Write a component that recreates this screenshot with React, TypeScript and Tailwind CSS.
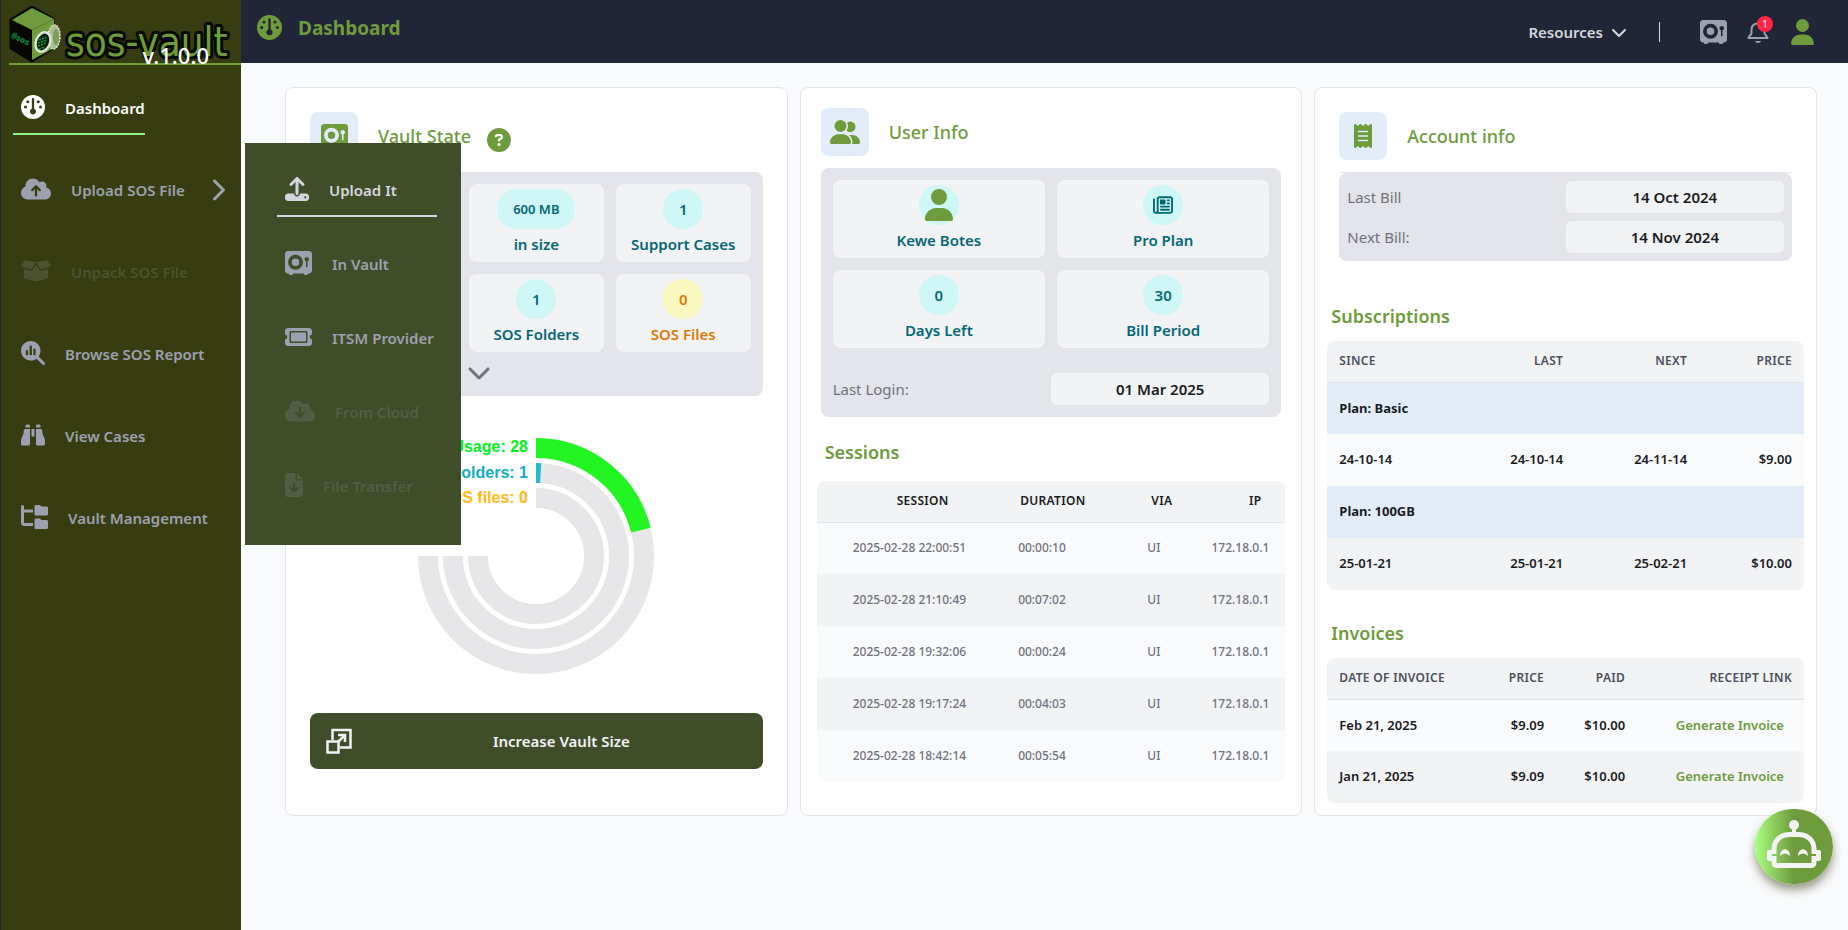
import type { ReactNode } from "react";
import type { IconType } from "react-icons";
import {
  FaBinoculars,
  FaBoxOpen,
  FaChevronDown,
  FaChevronRight,
  FaCircleQuestion,
  FaCloudArrowDown,
  FaCloudArrowUp,
  FaFileArrowDown,
  FaFolderTree,
  FaGauge,
  FaMagnifyingGlassChart,
  FaReceipt,
  FaRegNewspaper,
  FaTicket,
  FaUpload,
  FaUser,
  FaUserGroup,
  FaVault,
} from "react-icons/fa6";

type NavEntry = { label: string; icon: IconType; size: string; active?: boolean; disabled?: boolean; submenu?: boolean };

const mainNav: NavEntry[] = [
  { label: "Dashboard", icon: FaGauge, size: "w-6", active: true },
  { label: "Upload SOS File", icon: FaCloudArrowUp, size: "w-[30px]", submenu: true },
  { label: "Unpack SOS File", icon: FaBoxOpen, size: "w-[30px]", disabled: true },
  { label: "Browse SOS Report", icon: FaMagnifyingGlassChart, size: "w-6" },
  { label: "View Cases", icon: FaBinoculars, size: "w-6" },
  { label: "Vault Management", icon: FaFolderTree, size: "w-[27px]" },
];

const uploadNav: NavEntry[] = [
  { label: "Upload It", icon: FaUpload, size: "w-6", active: true },
  { label: "In Vault", icon: FaVault, size: "w-[27px]" },
  { label: "ITSM Provider", icon: FaTicket, size: "w-[27px]" },
  { label: "From Cloud", icon: FaCloudArrowDown, size: "w-[30px]", disabled: true },
  { label: "File Transfer", icon: FaFileArrowDown, size: "w-[18px]", disabled: true },
];

const sessions = [
  ["2025-02-28 22:00:51", "00:00:10", "UI", "172.18.0.1"],
  ["2025-02-28 21:10:49", "00:07:02", "UI", "172.18.0.1"],
  ["2025-02-28 19:32:06", "00:00:24", "UI", "172.18.0.1"],
  ["2025-02-28 19:17:24", "00:04:03", "UI", "172.18.0.1"],
  ["2025-02-28 18:42:14", "00:05:54", "UI", "172.18.0.1"],
];

const invoices = [
  ["Feb 21, 2025", "$9.09", "$10.00"],
  ["Jan 21, 2025", "$9.09", "$10.00"],
];

function Logo() {
  return (
    <svg viewBox="0 0 232 57" className="block h-[57px] w-[232px]" role="img" aria-label="sos-vault">
      <polygon points="23,1 44,13 44,42 23,55 2,42 2,14" fill="#050805" stroke="#050805" strokeWidth="3" strokeLinejoin="round" />
      <polygon points="23,2 45,13 23,24 3,14" fill="#6e9b3b" />
      <polygon points="23,24 45,13 45,42 23,54" fill="#6e9b3b" />
      <polygon points="3,15 22,25 22,54 3,43" fill="#050805" />
      <ellipse cx="45" cy="31" rx="6" ry="12" fill="#a9bd8c" stroke="#dfe6d4" strokeWidth="1.5" strokeDasharray="2 1" transform="rotate(4 45 31)" />
      <ellipse cx="47" cy="31" rx="3" ry="8" fill="#7f9a5a" />
      <ellipse cx="34" cy="36" rx="7" ry="10" fill="#06200f" stroke="#dfe6d4" strokeWidth="2.5" transform="rotate(22 34 36)" />
      <path d="M30 34l8-3M29 37l9-3M29 40l8-3M30 43l6-2" stroke="#17a24a" strokeWidth="1.5" strokeDasharray="2 1" />
      <text x="2" y="31" fontFamily="Liberation Mono, monospace" fontWeight="700" fontSize="8" fill="#13a545" transform="rotate(27 2 31)">
        @sos
      </text>
      <text
        x="57"
        y="50"
        fontFamily="DejaVu Sans Condensed, DejaVu Sans, sans-serif"
        fontSize="40"
        fill="#6e9b3b"
        stroke="#070a04"
        strokeWidth="6"
        strokeLinejoin="round"
        paintOrder="stroke"
      >
        sos-vault
      </text>
    </svg>
  );
}

function NavLink({ entry, activeClass }: { entry: NavEntry; activeClass: string }) {
  const Icon = entry.icon;
  const tone = entry.active ? activeClass : "border-transparent text-[#9da1af]";
  return (
    <a
      href="#"
      aria-disabled={entry.disabled}
      className={`flex h-[54px] items-center gap-5 border-b-2 pl-2 text-[15px] leading-6 font-semibold ${tone} ${entry.disabled ? "opacity-20" : ""}`}
    >
      <Icon className={`h-6 shrink-0 ${entry.size}`} />
      <span className="pt-0.5 whitespace-nowrap">{entry.label}</span>
    </a>
  );
}

function Sidebar() {
  return (
    <aside className="relative w-[241px] shrink-0 border-l border-[#23252e] bg-[#373d11]">
      <div className="relative ml-2 flex h-[65px] items-end border-b-2 border-[#6e9b3b]">
        <Logo />
        <span className="absolute right-8 -bottom-1 text-[22px] leading-6 font-medium text-white">v.1.0.0</span>
      </div>
      <nav aria-label="Main" className="mt-4 flex flex-col gap-7 pl-3">
        {mainNav.map((entry) => (
          <div key={entry.label} className="flex items-center justify-between pr-4">
            <NavLink entry={entry} activeClass="border-[#8df088] text-white" />
            {entry.submenu && (
              <button type="button" aria-label="Open upload menu" className="text-[#9da1af]">
                <FaChevronRight className="h-6 w-[15px]" />
              </button>
            )}
          </div>
        ))}
      </nav>
      <nav
        aria-label="Upload"
        className="absolute top-[143px] left-full z-10 flex w-[220px] flex-col gap-5 border-l-4 border-white bg-[#404d29] pt-5 pr-6 pb-8 pl-8"
      >
        {uploadNav.map((entry) => (
          <NavLink key={entry.label} entry={entry} activeClass="border-[#d5d6dd] text-[#d5d6dd]" />
        ))}
      </nav>
    </aside>
  );
}

function TopBar() {
  return (
    <header className="flex h-[63px] items-center justify-between bg-[#202638] pr-[34px] pl-4">
      <div className="flex items-center gap-4 pb-2 text-[#6e9b3b]">
        <FaGauge className="size-[25px]" />
        <h1 className="text-[19px] leading-6 font-bold">Dashboard</h1>
      </div>
      <div className="flex items-center text-[#d5d6dd]">
        <button type="button" className="flex items-center gap-2 text-[15px] leading-6 font-semibold">
          Resources
          <FaChevronDown className="size-4" />
        </button>
        <span className="ml-8 h-5 w-px bg-[#d5d6dd]" />
        <button type="button" aria-label="Vault" className="ml-10 text-[#9da1af]">
          <FaVault className="h-6 w-[27px]" />
        </button>
        <button type="button" aria-label="Notifications" className="relative ml-5 text-[#9da1af]">
          <svg viewBox="0 0 22 24" className="h-6 w-[22px]" fill="none" stroke="currentColor" strokeWidth="2" strokeLinejoin="round">
            <path d="M11 3.500C6.500 3.500 4.500 6.500 4.500 10V13C4.500 15 1.500 16 1.500 18H20.500C20.500 16 17.500 15 17.500 13V10C17.500 6.500 15.500 3.500 11 3.500Z" />
            <path d="M8 21H14C13.500 23.500 8.500 23.500 8 21Z" fill="currentColor" stroke="none" />
          </svg>
          <span className="absolute -top-1 -right-1 flex size-4 items-center justify-center rounded-full bg-[#ff2648] text-[10px] leading-4 text-white">
            1
          </span>
        </button>
        <button type="button" aria-label="Profile" className="ml-[22px] text-[#6e9b3b]">
          <FaUser className="h-[26px] w-[23px]" />
        </button>
      </div>
    </header>
  );
}

function CardTitle({ icon: Icon, size, children }: { icon: IconType; size: string; children: ReactNode }) {
  return (
    <div className="flex items-center gap-5 text-[#6e9b3b]">
      <span className="flex size-12 items-center justify-center rounded-lg bg-[#e3edfa]">
        <Icon className={`h-6 ${size}`} />
      </span>
      <h2 className="text-lg leading-6 font-medium">{children}</h2>
    </div>
  );
}

function Tile({ value, label, tone = "teal" }: { value: ReactNode; label: string; tone?: "teal" | "amber" }) {
  const text = tone === "teal" ? "text-[#046876]" : "text-[#e07a08]";
  const badge = tone === "teal" ? "bg-[#cff7f7]" : "bg-[#fbf8c0]";
  return (
    <div className={`flex h-[78px] flex-col items-center rounded-lg bg-[#f2f3f5] pt-[5px] text-[15px] leading-6 font-semibold ${text}`}>
      <span className={`flex h-10 min-w-10 items-center justify-center rounded-full ${badge}`}>{value}</span>
      <span className="mt-[3px] whitespace-nowrap">{label}</span>
    </div>
  );
}

function DateRow({ label, value }: { label: string; value: string }) {
  return (
    <div className="grid grid-cols-2 items-center text-[15px] leading-6">
      <span className="text-[#70727f]">{label}</span>
      <span className="rounded-md bg-[#f2f3f5] py-1 text-center font-semibold text-[#1a1c23]">{value}</span>
    </div>
  );
}

function arc(r: number, degrees: number) {
  const a = (degrees * Math.PI) / 180;
  const x = 200 + r * Math.sin(a);
  const y = 160 - r * Math.cos(a);
  return `M200 ${160 - r}A${r} ${r} 0 ${degrees > 180 ? 1 : 0} 1 ${x} ${y}`;
}

function UsageChart() {
  const rings = [
    { label: "Vault Usage", value: 28, r: 108, ring: "#22f522", text: "#00f01c", y: 56 },
    { label: "SOS Folders", value: 1, r: 83, ring: "#25b9cb", text: "#12aec4", y: 82 },
    { label: "SOS files", value: 0, r: 58, ring: "#feb019", text: "#ffb913", y: 107 },
  ];
  return (
    <svg viewBox="0 0 400 317" className="mx-auto block h-[317px] w-[400px]" role="img" aria-label="Vault usage">
      {rings.map((ring) => (
        <g key={ring.label} fill="none" strokeWidth="20">
          <path d={arc(ring.r, 270)} stroke="#e7e7e9" />
          {ring.value > 0 && <path d={arc(ring.r, (ring.value * 270) / 100 + 0.5)} stroke={ring.ring} />}
          <text x="192" y={ring.y} textAnchor="end" fill={ring.text} fontFamily="Liberation Sans, Arial, sans-serif" fontSize="16" fontWeight="700">
            {ring.label}: {ring.value}
          </text>
        </g>
      ))}
    </svg>
  );
}

function VaultCard() {
  return (
    <section className="rounded-lg border border-[#e4e5ea] bg-white p-6">
      <div className="flex items-center">
        <CardTitle icon={FaVault} size="w-[27px]">Vault State</CardTitle>
        <button type="button" aria-label="Help" className="mt-2 ml-4 text-[#6e9b3b]">
          <FaCircleQuestion className="size-6" />
        </button>
      </div>
      <div className="mt-3 rounded-lg bg-[#e4e5ea] p-3">
        <div className="grid grid-cols-3 gap-3">
          <div className="row-span-2 rounded-lg bg-[#f2f3f5]" />
          <Tile value={<span className="px-4 text-[13px]">600 MB</span>} label="in size" />
          <Tile value="1" label="Support Cases" />
          <Tile value="1" label="SOS Folders" />
          <Tile value="0" label="SOS Files" tone="amber" />
        </div>
        <div className="mt-2 grid grid-cols-3 gap-3">
          <button type="button" aria-label="Show more" className="col-start-2 -ml-0.5 justify-self-start text-[#70727f]">
            <FaChevronDown className="size-6" />
          </button>
        </div>
      </div>
      <UsageChart />
      <button type="button" className="flex h-14 w-full items-center rounded-lg bg-[#404d29] px-4 text-[15px] leading-6 font-semibold text-[#f2f3f5]">
        <svg viewBox="0 0 26 26" className="size-[26px] shrink-0" fill="none" stroke="currentColor" strokeWidth="2.500">
          <path d="M6.500 12V2H24.500V19.500H14" />
          <rect x="1.500" y="13.500" width="11" height="11" />
          <path d="M12 14L19 7" />
          <path d="M12 7H19V14" />
        </svg>
        <span className="flex-1 pl-6 text-center">Increase Vault Size</span>
      </button>
    </section>
  );
}

function UserCard() {
  return (
    <section className="rounded-lg border border-[#e4e5ea] bg-white px-4 py-5">
      <div className="px-1">
        <CardTitle icon={FaUserGroup} size="w-[30px]">User Info</CardTitle>
        <div className="mt-3 rounded-lg bg-[#e4e5ea] p-3">
          <div className="mb-[25px] grid grid-cols-2 gap-3">
            <Tile value={<FaUser className="h-8 w-7 text-[#6e9b3b]" />} label="Kewe Botes" />
            <Tile value={<FaRegNewspaper className="size-5" />} label="Pro Plan" />
            <Tile value="0" label="Days Left" />
            <Tile value="30" label="Bill Period" />
          </div>
          <DateRow label="Last Login:" value="01 Mar 2025" />
        </div>
      </div>
      <h3 className="mt-[23px] mb-[17px] pl-2 text-lg leading-6 font-semibold text-[#6e9b3b]">Sessions</h3>
      <div className="overflow-hidden rounded-lg">
        <table className="w-full table-fixed text-left text-xs">
          <colgroup>
            <col className="w-[40%]" />
            <col className="w-[28%]" />
            <col className="w-[12%]" />
            <col className="w-[20%]" />
          </colgroup>
          <thead className="border-b border-[#e2e3e7] bg-[#f2f3f5] tracking-wide text-[#1a1c23]">
            <tr className="h-[41px]">
              <th className="pl-20 font-semibold">SESSION</th>
              <th className="pl-4 font-semibold">DURATION</th>
              <th className="pl-4 font-semibold">VIA</th>
              <th className="pr-6 text-right font-semibold">IP</th>
            </tr>
          </thead>
          <tbody className="font-medium text-[#70727f]">
            {sessions.map(([start, duration, via, ip]) => (
              <tr key={start} className="h-[52px] odd:bg-[#f9fafc] even:bg-[#f2f3f5]">
                <td className="pl-9 whitespace-nowrap">{start}</td>
                <td className="pl-3.5">{duration}</td>
                <td className="pl-3">{via}</td>
                <td className="pr-4 text-right">{ip}</td>
              </tr>
            ))}
          </tbody>
        </table>
      </div>
    </section>
  );
}

function AccountCard() {
  const head = "border-b border-[#e2e3e7] bg-[#f2f3f5] text-xs tracking-wide text-[#4c4f5c]";
  return (
    <section className="rounded-lg border border-[#e4e5ea] bg-white p-3">
      <div className="px-3 pt-3">
        <CardTitle icon={FaReceipt} size="w-[18px]">Account info</CardTitle>
        <div className="mt-3 border-t border-[#e4e5ea]">
          <div className="flex flex-col gap-2 rounded-lg bg-[#e4e5ea] p-2">
            <DateRow label="Last Bill" value="14 Oct 2024" />
            <DateRow label="Next Bill:" value="14 Nov 2024" />
          </div>
        </div>
      </div>
      <h3 className="mt-[43px] mb-[13px] pl-1 text-lg leading-6 font-semibold text-[#6e9b3b]">Subscriptions</h3>
      <div className="overflow-hidden rounded-lg">
        <table className="w-full table-fixed text-right text-[13px] text-[#1a1c23]">
          <colgroup>
            <col className="w-[26%]" />
            <col className="w-[26%]" />
            <col className="w-[26%]" />
            <col className="w-[22%]" />
          </colgroup>
          <thead className={head}>
            <tr className="h-[41px]">
              <th className="px-3 text-left font-semibold">SINCE</th>
              <th className="px-3 font-semibold">LAST</th>
              <th className="px-3 font-semibold">NEXT</th>
              <th className="px-3 font-semibold">PRICE</th>
            </tr>
          </thead>
          <tbody className="font-semibold">
            <tr className="h-[52px] bg-[#e3edfa]">
              <td colSpan={4} className="px-3 text-left font-bold">Plan: Basic</td>
            </tr>
            <tr className="h-[52px] bg-[#f9fafc]">
              <td className="px-3 text-left">24-10-14</td>
              <td className="px-3">24-10-14</td>
              <td className="px-3">24-11-14</td>
              <td className="px-3">$9.00</td>
            </tr>
            <tr className="h-[52px] bg-[#e3edfa]">
              <td colSpan={4} className="px-3 text-left font-bold">Plan: 100GB</td>
            </tr>
            <tr className="h-[52px] bg-[#f2f3f5]">
              <td className="px-3 text-left">25-01-21</td>
              <td className="px-3">25-01-21</td>
              <td className="px-3">25-02-21</td>
              <td className="px-3">$10.00</td>
            </tr>
          </tbody>
        </table>
      </div>
      <h3 className="mt-[31px] mb-[13px] pl-1 text-lg leading-6 font-semibold text-[#6e9b3b]">Invoices</h3>
      <div className="overflow-hidden rounded-lg">
        <table className="w-full table-fixed text-right text-[13px] text-[#1a1c23]">
          <colgroup>
            <col className="w-[30%]" />
            <col className="w-[18%]" />
            <col className="w-[17%]" />
            <col className="w-[35%]" />
          </colgroup>
          <thead className={head}>
            <tr className="h-[41px]">
              <th className="px-3 text-left font-semibold whitespace-nowrap">DATE OF INVOICE</th>
              <th className="px-3 font-semibold">PRICE</th>
              <th className="px-3 font-semibold">PAID</th>
              <th className="px-3 font-semibold">RECEIPT LINK</th>
            </tr>
          </thead>
          <tbody className="font-semibold">
            {invoices.map(([date, price, paid]) => (
              <tr key={date} className="h-[52px] odd:bg-[#f9fafc] even:bg-[#f2f3f5]">
                <td className="px-3 text-left">{date}</td>
                <td className="px-3">{price}</td>
                <td className="px-3">{paid}</td>
                <td className="px-5">
                  <button type="button" className="text-[#6e9b3b]">Generate Invoice</button>
                </td>
              </tr>
            ))}
          </tbody>
        </table>
      </div>
    </section>
  );
}

function AssistantButton() {
  return (
    <button
      type="button"
      aria-label="Open assistant"
      className="fixed right-[15px] bottom-[46px] flex h-[75px] w-[78px] items-center justify-center rounded-full bg-linear-to-r from-[#aaff80] to-[#6e9b3b] to-50% text-[#f2f3f5] shadow-[0_6px_10px_rgba(55,61,17,0.5)]"
    >
      <svg viewBox="0 0 56 52" className="h-[52px] w-14 -translate-y-0.5" fill="none">
        <circle cx="28" cy="6" r="5" fill="currentColor" />
        <path d="M28 8V16" stroke="currentColor" strokeWidth="4" />
        <path d="M8 35V30C8 21 15 15.500 24 15.500H32C41 15.500 48 21 48 30V35" stroke="currentColor" strokeWidth="5" />
        <path d="M8 37V43C8 45 9 46.500 11 46.500H45C47 46.500 48 45 48 43V37" stroke="currentColor" strokeWidth="5" />
        <path d="M6 31H3C1.500 31 1 32 1 33V40C1 41.500 2 42 3 42H6ZM50 31H53C54.500 31 55 32 55 33V40C55 41.500 54 42 53 42H50Z" fill="currentColor" />
        <path d="M14 37C14 28 24 28 24 37C21 33.500 17 33.500 14 37ZM32 37C32 28 42 28 42 37C39 33.500 35 33.500 32 37Z" fill="currentColor" />
      </svg>
    </button>
  );
}

export default function App() {
  return (
    <div className="flex min-h-screen bg-[#f9fafc] font-['Noto_Sans',sans-serif]">
      <Sidebar />
      <div className="min-w-0 flex-1">
        <TopBar />
        <main className="grid grid-cols-3 gap-3 pt-6 pr-[31px] pb-6 pl-11">
          <VaultCard />
          <UserCard />
          <AccountCard />
        </main>
      </div>
      <AssistantButton />
    </div>
  );
}
